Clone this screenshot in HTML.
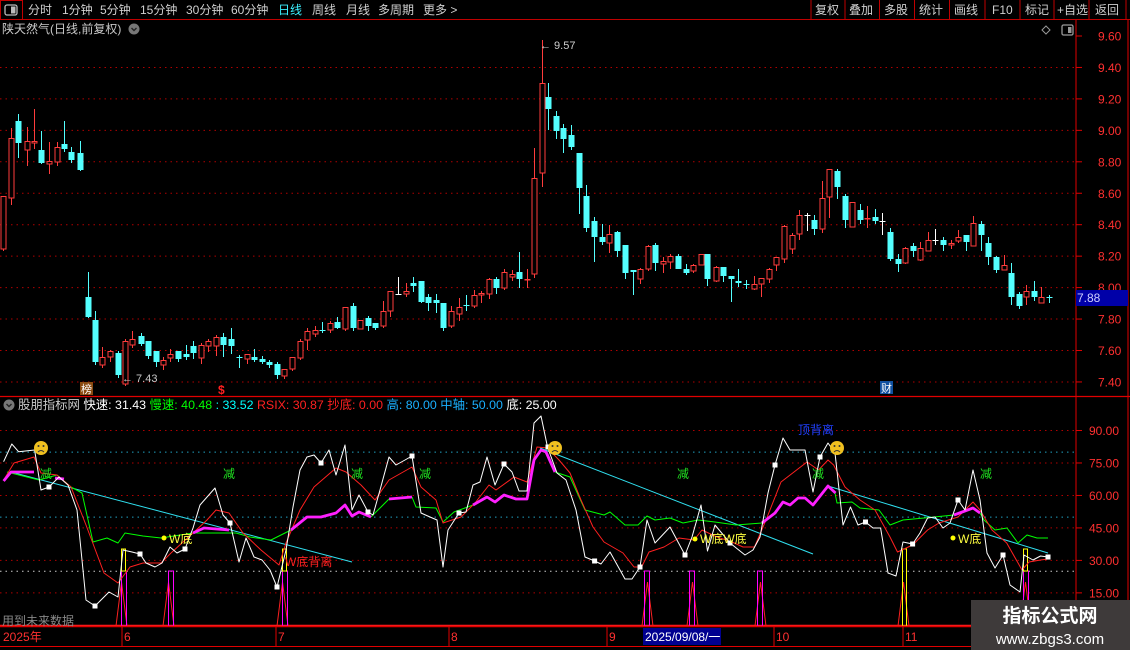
<!DOCTYPE html>
<html><head><meta charset="utf-8"><style>
body{margin:0;background:#000;width:1130px;height:650px;overflow:hidden;font-family:"Liberation Sans","Noto Sans CJK SC",sans-serif;}
svg{position:absolute;left:0;top:0}
text{font-family:"Liberation Sans","Noto Sans CJK SC",sans-serif}
</style></head><body>
<svg id="s" width="1130" height="650" viewBox="0 0 1130 650" xmlns="http://www.w3.org/2000/svg">
<rect width="1130" height="650" fill="#000"/>
<line x1="0" y1="19.5" x2="1130" y2="19.5" stroke="#c00000"/>
<rect x="0.5" y="0.5" width="22" height="19" fill="none" stroke="#c00000"/>
<rect x="5" y="5" width="12" height="10" rx="2" fill="none" stroke="#bbb" stroke-width="1.3"/>
<rect x="11" y="6.5" width="4.5" height="7" fill="#bbb"/>
<g font-size="12" fill="#d0d0d0">
<text x="28" y="14">分时</text><text x="62" y="14">1分钟</text><text x="100" y="14">5分钟</text><text x="140" y="14">15分钟</text><text x="186" y="14">30分钟</text><text x="231" y="14">60分钟</text><text x="278" y="14" fill="#3cf0ff">日线</text><text x="312" y="14">周线</text><text x="346" y="14">月线</text><text x="378" y="14">多周期</text><text x="423" y="14">更多 &gt;</text>
<text x="815" y="14">复权</text><text x="849" y="14">叠加</text><text x="884" y="14">多股</text><text x="919" y="14">统计</text><text x="954" y="14">画线</text><text x="992" y="14">F10</text><text x="1025" y="14">标记</text><text x="1057" y="14">+自选</text><text x="1095" y="14">返回</text>
</g>
<g stroke="#c00000"><line x1="811" y1="0" x2="811" y2="19"/><line x1="845" y1="0" x2="845" y2="19"/><line x1="879.5" y1="0" x2="879.5" y2="19"/><line x1="914.5" y1="0" x2="914.5" y2="19"/><line x1="949.5" y1="0" x2="949.5" y2="19"/><line x1="985" y1="0" x2="985" y2="19"/><line x1="1020" y1="0" x2="1020" y2="19"/><line x1="1054" y1="0" x2="1054" y2="19"/><line x1="1089" y1="0" x2="1089" y2="19"/><line x1="1126" y1="0" x2="1126" y2="19"/></g>
<text x="2" y="33" font-size="12" fill="#c8c8c8">陕天然气(日线,前复权)</text>
<circle cx="134" cy="29" r="5.5" fill="#777"/><path d="M131.5 28l2.5 2.5 2.5-2.5" stroke="#222" fill="none" stroke-width="1.4"/>
<path d="M1046 26l4 4-4 4-4-4z" fill="none" stroke="#999"/>
<rect x="1062" y="25" width="11" height="10" rx="1.5" fill="none" stroke="#999" stroke-width="1.3"/><rect x="1068" y="27" width="3.5" height="6" fill="#999"/>
<line x1="1076" y1="20" x2="1076" y2="626" stroke="#e00000"/>
<line x1="1128" y1="20" x2="1128" y2="626" stroke="#e00000"/>
<line x1="0" y1="396.5" x2="1130" y2="396.5" stroke="#e00000" stroke-width="1.2"/>
<g id="grid"></g>
<g id="cand"></g>
<g font-size="12" fill="#ff3030" id="plab"></g>
<rect x="1076" y="290" width="52" height="16" fill="#0000a8"/>
<text x="1077" y="302" font-size="12" fill="#d0d0ff">7.88</text>
<text x="540" y="49" font-size="11" fill="#d0d0d0">← 9.57</text>
<text x="122" y="382" font-size="11" fill="#c8c8c8">← 7.43</text>
<rect x="80" y="382" width="13" height="13" fill="#8a4a10"/><text x="81" y="393" font-size="11" fill="#fff">榜</text>
<text x="218" y="394" font-size="12" fill="#ff2020" font-weight="bold">$</text>
<rect x="880" y="381" width="13" height="13" fill="#1050a0"/><text x="881" y="392" font-size="11" fill="#fff">财</text>
<circle cx="9" cy="405" r="5.5" fill="#777"/><path d="M6.5 404l2.5 2.5 2.5-2.5" stroke="#222" fill="none" stroke-width="1.4"/>
<text y="409" font-size="12.4" xml:space="preserve"><tspan x="18" fill="#c8c8c8">股朋指标网</tspan><tspan fill="#fff"> 快速: 31.43 </tspan><tspan fill="#00ff00">慢速: 40.48 </tspan><tspan fill="#00ffff">: 33.52 </tspan><tspan fill="#ff2020">RSIX: 30.87 抄底: 0.00 </tspan><tspan fill="#1ab0ff">高: 80.00 中轴: 50.00 </tspan><tspan fill="#fff">底: 25.00</tspan></text>
<g id="ind"></g>
<line x1="0" y1="626.5" x2="1130" y2="626.5" stroke="#e00000" stroke-width="1.5"/>
<line x1="0" y1="646.5" x2="1130" y2="646.5" stroke="#e00000"/>
<g font-size="12" fill="#ff3030"><text x="3" y="641">2025年</text><text x="124" y="641">6</text><text x="278" y="641">7</text><text x="451" y="641">8</text><text x="609" y="641">9</text><text x="776" y="641">10</text><text x="905" y="641">11</text></g>
<g stroke="#e00000"><line x1="122" y1="627" x2="122" y2="646"/><line x1="276" y1="627" x2="276" y2="646"/><line x1="449" y1="627" x2="449" y2="646"/><line x1="607" y1="627" x2="607" y2="646"/><line x1="774" y1="627" x2="774" y2="646"/><line x1="903" y1="627" x2="903" y2="646"/></g>
<rect x="643" y="628" width="78" height="17" fill="#000090"/><text x="645" y="641" font-size="12" fill="#fff">2025/09/08/一</text>
<text x="2" y="625" font-size="12" fill="#888">用到未来数据</text>
<rect x="971" y="600" width="159" height="50" fill="#3e3a3a"/>
<text x="1050" y="622" font-size="19" font-weight="bold" fill="#fff" text-anchor="middle">指标公式网</text>
<text x="1050" y="644" font-size="15" fill="#fff" text-anchor="middle">www.zbgs3.com</text>
</svg>
<script>
var NS="http://www.w3.org/2000/svg";
function el(p,t,a){var e=document.createElementNS(NS,t);for(var k in a)e.setAttribute(k,a[k]);document.getElementById(p).appendChild(e);return e;}
for(var i=1;i<=11;i++){var y=36+i*31.45;el("grid","line",{x1:0,x2:1076,y1:y,y2:y,stroke:"#b00000","stroke-dasharray":"1.5 4"});}
var pl=["9.60","9.40","9.20","9.00","8.80","8.60","8.40","8.20","8.00","7.80","7.60","7.40"];
for(var i=0;i<12;i++){var y=36+i*31.45;var t=el("plab","text",{x:1098,y:y+4.5});t.textContent=pl[i];el("grid","line",{x1:1076,x2:1082,y1:y,y2:y,stroke:"#e00000"});}
function iy(v){return 430.5+(90-v)*2.165;}
[[90,"#b00000"],[75,"#b00000"],[60,"#b00000"],[45,"#b00000"],[30,"#b00000"],[15,"#b00000"],[80,"#20a0c0"],[50,"#20a0c0"],[25,"#ccc"]].forEach(function(g){var y=iy(g[0]);el("grid","line",{x1:0,x2:1076,y1:y,y2:y,stroke:g[1],"stroke-dasharray":"1.5 4"});});
["90.00","75.00","60.00","45.00","30.00","15.00"].forEach(function(s,i){var y=iy(90-15*i);var t=el("plab","text",{x:1089,y:y+4.5});t.textContent=s;el("grid","line",{x1:1076,x2:1082,y1:y,y2:y,stroke:"#e00000"});});
var C=[[3.4,196,249,196,251,"r"],[11,138,198,128,205,"r"],[18,121,143,114,158,"c"],[27,141,150,127,166,"r"],[34,141,143,109,149,"r"],[41,150,163,131,164,"c"],[49,161,164,142,174,"r"],[57,147,162,142,166,"r"],[64,144,149,121,152,"c"],[71,152,160,147,163,"c"],[80,153,170,141,171,"c"],
[88,297,317,272,318,"c"],[94.5,320,362,311,365,"c"],[102,357,365,347,368,"r"],[110,351,357,350,362,"r"],[118,353,375,351,378,"c"],[125,341,384,339,386,"r"],[132,339,345,331,348,"r"],[141,336,344,333,346,"c"],[148,341,356,341,359,"c"],[156,351,362,351,367,"c"],[163,360,365,357,370,"r"],[170,354,358,349,362,"r"],[178,351,359,351,362,"c"],[186,354,357,345,360,"c"],[193,346,353,341,359,"c"],[201,345,358,343,364,"r"],[208,341,346,339,352,"r"],[216,337,346,335,356,"r"],[223,337,345,333,357,"c"],[231,339,346,328,354,"c"],[239,357,358,355,368,"c"],[247,354,359,354,364,"r"],[254,357,360,349,362,"c"],[262,359,362,356,364,"c"],[269,362,365,360,368,"c"],[277,364,375,362,379,"c"],[284,369,376,369,379,"r"],[292,357,369,357,371,"r"],[300,341,358,339,360,"r"],[307,331,340,328,350,"r"],[315,330,334,326,337,"r"],[322,330,331,322,333,"c"],[330,323,330,321,333,"r"],[337,322,328,317,329,"c"],[345,307,329,307,331,"r"],[353,306,328,303,331,"c"],[360,320,329,320,329,"r"],[368,318,326,316,331,"c"],[375,323,328,323,330,"c"],[383,311,326,301,328,"r"],[390,291,311,291,317,"r"],[398,294,295,277,295,"w"],[406,291,294,283,297,"r"],[413,283,286,277,292,"c"],[421,281,302,281,303,"c"],[428,297,303,294,311,"c"],[436,300,303,294,313,"c"],[443,303,328,303,331,"c"],[451,311,326,306,328,"r"],[459,307,314,298,321,"r"],[466,305,306,295,311,"c"],[474,295,306,290,308,"r"],[481,293,295,291,303,"r"],[489,279,294,278,299,"r"],[496,279,288,277,294,"c"],[504,272,288,269,290,"r"],[512,274,277,270,281,"r"],[519,272,279,252,288,"c"],[527,279,280,269,288,"r"],[534,178,274,148,278,"r"],
[541.5,83,173,40,187,"r"],[548,97,109,83,130,"c"],[556,116,131,111,139,"c"],[563,128,139,124,153,"c"],[571,135,147,125,150,"c"],[579,153,188,153,214,"c"],[586,196,228,185,232,"c"],[594,221,237,217,262,"c"],[602,237,242,224,245,"c"],[609,234,243,225,253,"r"],[617,232,251,231,257,"c"],[625,245,273,245,279,"c"],[633,270,272,270,295,"c"],[640,269,279,268,284,"r"],[648,246,269,245,271,"r"],[655,245,263,243,271,"c"],[663,261,264,257,273,"r"],[670,256,262,254,269,"r"],[677.5,256,269,254,269,"c"],[685.5,269,273,264,275,"c"],[693,265,271,264,273,"r"],[700.5,254,265,254,265,"r"],[707,254,279,254,286,"c"],[716,267,281,266,282,"r"],[723,267,276,267,282,"c"],[731,276,279,276,302,"c"],[738,281,283,269,287,"c"],[746,284,285,280,289,"c"],[754,284,289,276,290,"r"],[761,278,284,278,297,"r"],[769,269,279,268,283,"r"],[775.5,257,265,257,271,"r"],[783.6,226,259,225,263,"r"],[792,235,249,233,254,"r"],[798.6,215,234,210,240,"r"],[806.6,215,216,213,231,"w"],[814,220,229,215,235,"c"],[822,198,229,181,233,"r"],[829,169,197,169,218,"r"],[837,171,187,169,199,"c"],[844.6,196,220,194,228,"c"],[852,202,227,202,227,"r"],[860,210,220,204,224,"c"],[867,218,219,206,228,"r"],[875,217,221,209,224,"c"],[882,221,222,213,235,"w"],[890,232,259,228,261,"c"],[898,259,264,254,272,"c"],[905,248,263,247,264,"r"],[913,246,251,243,257,"c"],[920,248,260,242,261,"r"],[928,240,251,232,251,"r"],[935,240,241,229,245,"w"],[943,240,245,237,251,"c"],[951,243,245,240,249,"r"],[958,237,241,230,243,"r"],[965.6,235,242,235,251,"c"],[973,223,246,216,246,"r"],[981,224,235,221,251,"c"],[988,243,257,237,265,"c"],[996,257,270,256,273,"c"],[1004,265,270,255,270,"r"],[1011,273,297,263,305,"c"],[1019,294,306,292,309,"c"],[1026,291,297,285,305,"r"],[1034,291,297,281,301,"c"],[1041,297,303,287,303,"r"],[1049,297,298,295,303,"c"]];
C.forEach(function(c){var col=c[5]=="r"?"#ff3c3c":c[5]=="c"?"#54ffff":"#ffffff";var x=Math.round(c[0])+0.5;
el("cand","line",{x1:x,x2:x,y1:c[3],y2:c[4],stroke:col});
var h=Math.max(1,c[2]-c[1]);
if(c[5]=="r")el("cand","rect",{x:x-2.5,y:c[1]+0.5,width:5,height:h-0.5,fill:"#000",stroke:col});
else el("cand","rect",{x:x-3,y:c[1],width:6,height:h,fill:col});});
function pts(a){return a.map(function(p){return p[0]+","+p[1]}).join(" ");}
function pline(a,col,w){el("ind","polyline",{points:pts(a),fill:"none",stroke:col,"stroke-width":w||1,"stroke-linejoin":"round"});}
[121,168,282,647,692,760,903,1025].forEach(function(x){el("ind","polyline",{points:(x-5)+",626 "+(x+0.5)+",582 "+(x+6)+",626",fill:"none",stroke:"#ff2020"});});
el("ind","line",{x1:0,x2:1076,y1:625.5,y2:625.5,stroke:"#ff2020","stroke-width":1.5});
[121,168,282,644,689,757,1023].forEach(function(x){el("ind","rect",{x:x+0.5,y:571,width:5,height:55,fill:"none",stroke:"#ff00ff"});});
[[121,549,571],[282,549,571],[1023,549,571],[902,549,626]].forEach(function(r){el("ind","rect",{x:r[0]+0.5,y:r[1],width:4,height:r[2]-r[1],fill:"none",stroke:"#ffff00"});});
pline([[11,472],[352,562]],"#30e0f0");pline([[540,448],[813,554]],"#30e0f0");pline([[828,486],[1048,553]],"#30e0f0");
pline([[7,472],[39,480],[57,475],[71,487],[82,493],[93,542],[107,538],[118,543],[125,533],[143,536],[161,538],[193,533],[236,533],[250,537],[271,540],[291,530]],"#00ff00");
pline([[371,517],[389,499]],"#00ff00");pline([[412,497],[416,507],[436,508],[443,522],[454,512],[473,505]],"#00ff00");
pline([[555,472],[570,477],[585,510],[604,515],[610,512],[625,525],[638,525],[647,516],[655,520],[670,518],[683,523],[698,520],[715,522],[736,525],[762,523]],"#00ff00");
pline([[835,493],[837,503],[852,502],[860,508],[879,510],[890,525],[903,520],[924,518],[954,515]],"#00ff00");
pline([[980,513],[984,520],[995,530],[1007,528],[1018,543],[1027,535],[1037,538],[1048,538]],"#00ff00");
pline([[3.6,480],[14,463],[34,457],[41,473],[57,475],[71,487],[86,525],[104,573],[118,583],[130,567],[143,563],[161,563],[171,553],[193,533],[207,520],[216,510],[229,513],[243,533],[261,550],[279,565],[286,543],[300,510],[314,487],[336,468],[346,472],[361,485],[375,500],[389,480],[412,467],[421,487],[436,500],[443,523],[461,517],[475,503],[489,485],[496,490],[514,477],[527,482],[537,447],[547.5,448],[559,460],[570,473],[581,500],[593,527],[604,542],[623,553],[634,567],[641.6,567],[649,552],[664,547],[679,538],[694,540],[702,530],[717,537],[732,542],[743,547],[754.5,547],[766,520],[781,482],[807,462],[818.5,470],[828,460],[833.6,465],[845,487],[860,500],[875,510],[890,537],[897.5,552],[912.6,545],[927.6,530],[939,523],[958,517],[973,502],[980,510],[992,530],[1006.7,543],[1022,570],[1029,562],[1040.5,560],[1048,559]],"#ff2020");
[[[3.6,481],[11,472],[34,472]],[[55,478],[64,479]],[[193,533],[204,528],[229,530]],[[291,530],[307,517],[321,517],[336,513],[345,505],[352,516],[359,512],[371,517]],[[389,499],[412,497]],[[473,505],[487,497],[495,502],[504,495],[516,499],[527,499],[534,460],[541,450],[546,452],[555,472]],[[762,523],[775,513],[783,502],[790,505],[798,498],[805,498],[813,505],[828,486],[835.5,493]],[[954,515],[973,508],[980,513]]].forEach(function(a){pline(a,"#ff20ff",2.8);});
pline([[3.6,461.7],[11.8,444],[18.6,451.7],[34.6,450],[41,490],[49,487],[59,477],[68,485],[77,510],[86,600],[95,606],[109,592],[118,597],[123,550],[132,552],[140,554],[146,563],[155,567],[162,563],[170,547],[177,553],[185,549],[193,528],[200,505],[215,488],[223,515],[230,523],[239,562],[246,538],[254,557],[262,560],[270,570],[277,587],[286,550],[293,507],[300,470],[307,457],[314,455],[321,463],[329,450],[336,475],[345,445],[352,510],[359,495],[368,512],[373,515],[380,490],[389,457],[396,465],[405,460],[412,456],[421,513],[430,517],[437,520],[443,567],[448,530],[459,513],[466,512],[473,485],[480,482],[487,457],[495,485],[504,464],[512,472],[519,491],[527,491],[534,423],[541,416],[547.5,447],[557,473],[566,480],[576,510],[585,557],[594.6,561],[601,564],[610,552],[625,579],[632,579],[640,567],[647,520],[655,543],[670,527],[685,555],[692,537],[701,505],[707.5,551],[715,525],[730,543],[745,555],[753,550],[760,537],[768,493],[775,465],[783,438],[790,450],[805,450],[813,492],[820,457],[828,443],[835,453],[843,525],[850.5,507],[858,525],[865.5,522],[873,528],[880.6,528],[888,573],[896,576],[903,542],[912.6,544],[920,533],[927.6,518],[935,517],[943,528],[950,523],[958,500],[965,510],[973,470],[980,500],[987,553],[995,568],[1003,555],[1010,585],[1020,592],[1024,555],[1033,560],[1040.5,556],[1048,557]],"#ffffff");
[[49,487],[95,606],[140,554],[185,549],[230,523],[277,587],[321,463],[368,512],[412,456],[459,513],[504,464],[548,447],[594.6,561],[640,567],[685,555],[730,543],[775,465],[820,457],[865.5,522],[912.6,544],[958,500],[1003,555],[1048,557]].forEach(function(p){el("ind","rect",{x:p[0]-2.5,y:p[1]-2.5,width:5,height:5,fill:"#fff"});});
function tx(x,y,s,col,fs){var t=el("ind","text",{x:x,y:y,fill:col,"font-size":fs||12});t.textContent=s;}
[[40,478],[223,478],[351,478],[419,478],[677,478],[812,478],[980,478]].forEach(function(p){tx(p[0],p[1],"减","#20e020");});
[[164,538],[695,539],[953,538]].forEach(function(p){el("ind","circle",{cx:p[0],cy:p[1],r:2.5,fill:"#ffff00"});});
tx(169,543,"W底","#ffff40");tx(700,543,"W底W底","#ffff40");tx(958,543,"W底","#ffff40");
tx(285,566,"W底背离","#ff2020");tx(798,434,"顶背离","#2040ff");
[[41,448],[555,448],[837,448]].forEach(function(p){el("ind","circle",{cx:p[0],cy:p[1],r:7,fill:"#f0c020"});el("ind","circle",{cx:p[0]-2.5,cy:p[1]-2,r:1,fill:"#333"});el("ind","circle",{cx:p[0]+2.5,cy:p[1]-2,r:1,fill:"#333"});el("ind","path",{d:"M"+(p[0]-3)+" "+(p[1]+4)+"q3 -3 6 0",stroke:"#333",fill:"none"});});
</script>
</body></html>
